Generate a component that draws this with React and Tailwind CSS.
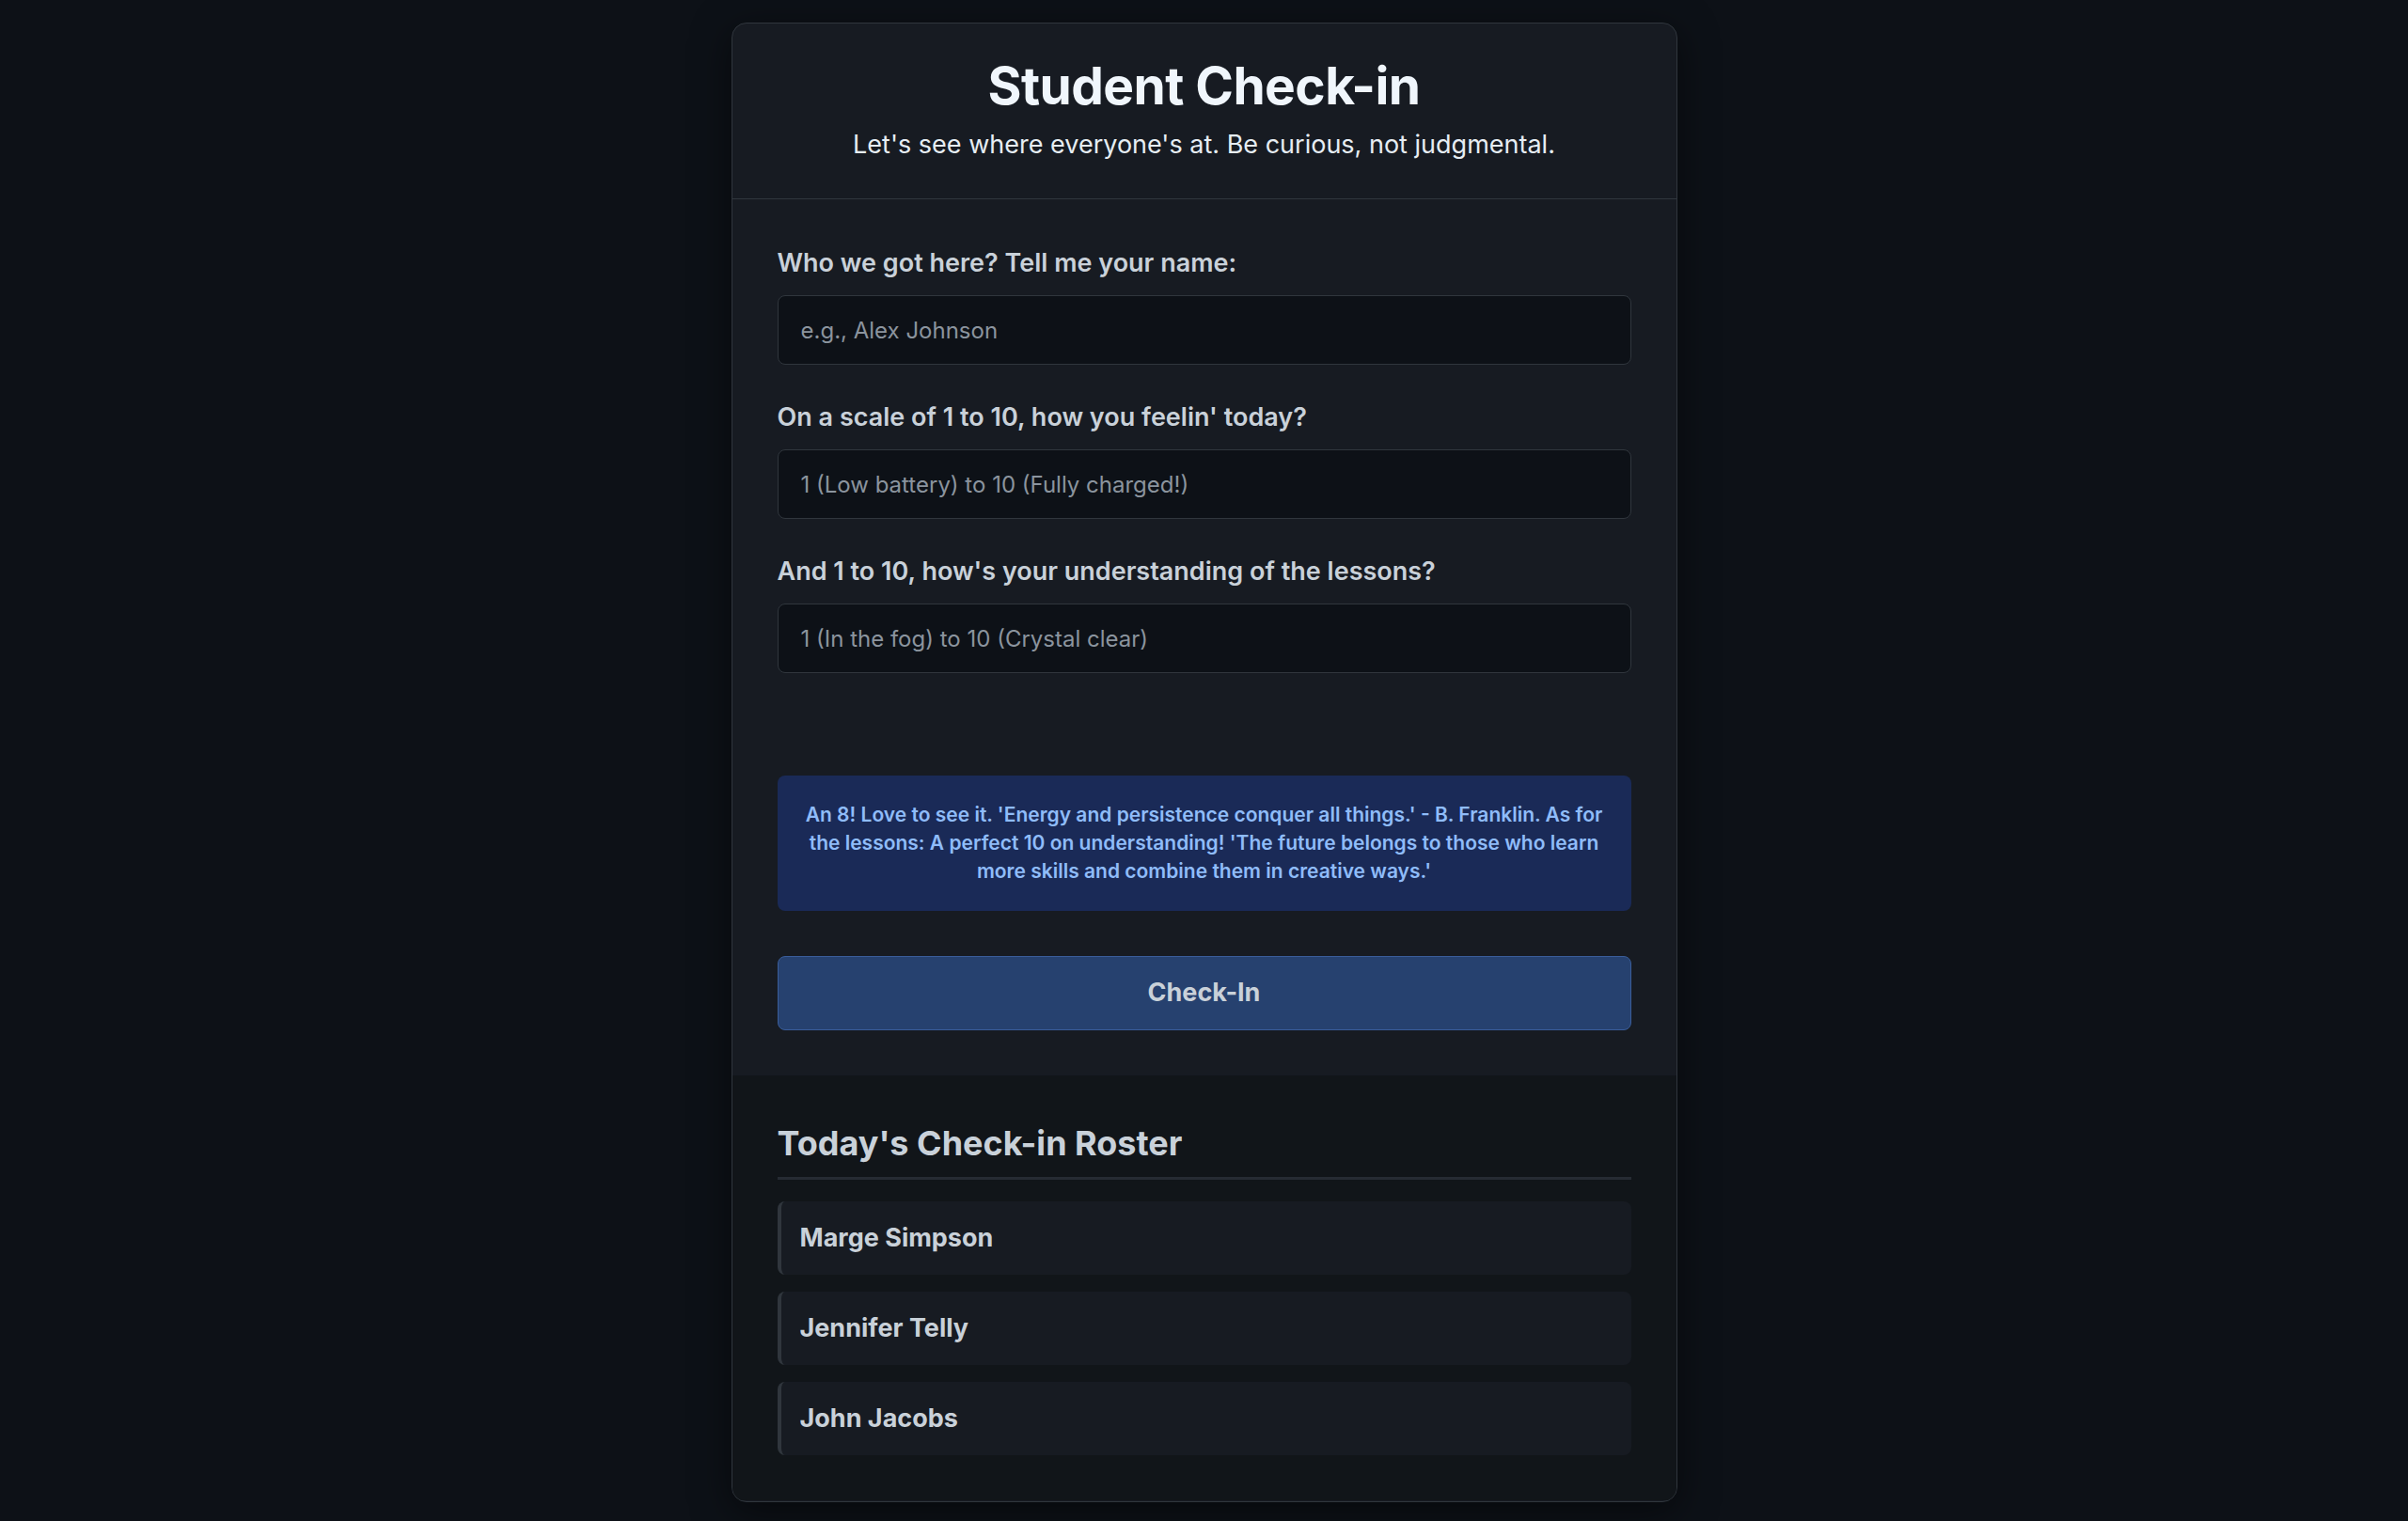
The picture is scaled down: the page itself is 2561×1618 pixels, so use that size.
import React, { useState } from "react";

const roster = ["Marge Simpson", "Jennifer Telly", "John Jacobs"];

const fields = [
  { id: "name", label: "Who we got here? Tell me your name:", placeholder: "e.g., Alex Johnson" },
  { id: "feeling", label: "On a scale of 1 to 10, how you feelin' today?", placeholder: "1 (Low battery) to 10 (Fully charged!)" },
  { id: "understanding", label: "And 1 to 10, how's your understanding of the lessons?", placeholder: "1 (In the fog) to 10 (Crystal clear)" },
];

export default function App() {
  const [values, setValues] = useState({ name: "", feeling: "", understanding: "" });

  return (
    <div
      className="min-h-screen bg-[#0d1117] flex justify-center pt-[24px] pb-[20px]"
      style={{ fontFamily: "Inter, 'Noto Sans', sans-serif" }}
    >
      <div className="w-[1006px] rounded-2xl border border-[#30363d] bg-[#171b22] overflow-hidden shadow-[0_10px_40px_rgba(0,0,0,0.5)]">
        {/* header */}
        <div className="border-b border-[#30363d] px-12 pt-[32px] pb-[38px] text-center">
          <h1 className="text-[55px] leading-[68px] font-bold text-[#f0f6fc] tracking-[-0.01em]">Student Check-in</h1>
          <p className="mt-[10px] text-[27px] leading-[38px] text-[#e6edf3]">
            Let's see where everyone's at. Be curious, not judgmental.
          </p>
        </div>

        {/* form */}
        <div className="px-12 pt-[48px] pb-[48px]">
          <div className="flex flex-col gap-[36px]">
            {fields.map((f) => (
              <div key={f.id}>
                <label htmlFor={f.id} className="block mb-[15px] text-[27px] leading-[39px] font-semibold text-[#c9d1d9]">
                  {f.label}
                </label>
                <input
                  id={f.id}
                  value={values[f.id]}
                  onChange={(e) => setValues({ ...values, [f.id]: e.target.value })}
                  placeholder={f.placeholder}
                  className="w-full h-[74px] rounded-lg border border-[#30363d] bg-[#0d1117] px-6 text-[24px] text-[#c9d1d9] placeholder:text-[#8b949e] outline-none"
                />
              </div>
            ))}
          </div>

          <div className="mt-[109px] rounded-lg bg-[#1a2a57] px-6 py-[27px] text-center text-[21px] leading-[30px] font-semibold text-[#8fbcf9]">
            An 8! Love to see it. 'Energy and persistence conquer all things.' - B. Franklin. As for the lessons: A perfect 10 on understanding! 'The future belongs to those who learn more skills and combine them in creative ways.'
          </div>

          <button className="mt-[48px] w-full h-[79px] rounded-lg border border-[#3a5d9a] bg-[#26416f] text-[27px] font-bold text-[#c9d1d9]">
            Check-In
          </button>
        </div>

        {/* roster */}
        <div className="bg-[#111519] px-12 pt-[50px] pb-[48px]">
          <h2 className="pb-[14px] border-b-[3px] border-[#262b33] text-[36px] leading-[44px] font-bold text-[#c9d1d9]">
            Today's Check-in Roster
          </h2>
          <ul className="mt-[23px] flex flex-col gap-[18px]">
            {roster.map((name) => (
              <li
                key={name}
                className="h-[78px] flex items-center rounded-lg border-l-4 border-[#30363d] bg-[#171b22] px-5 text-[27px] font-bold text-[#c9d1d9]"
              >
                {name}
              </li>
            ))}
          </ul>
        </div>
      </div>
    </div>
  );
}
